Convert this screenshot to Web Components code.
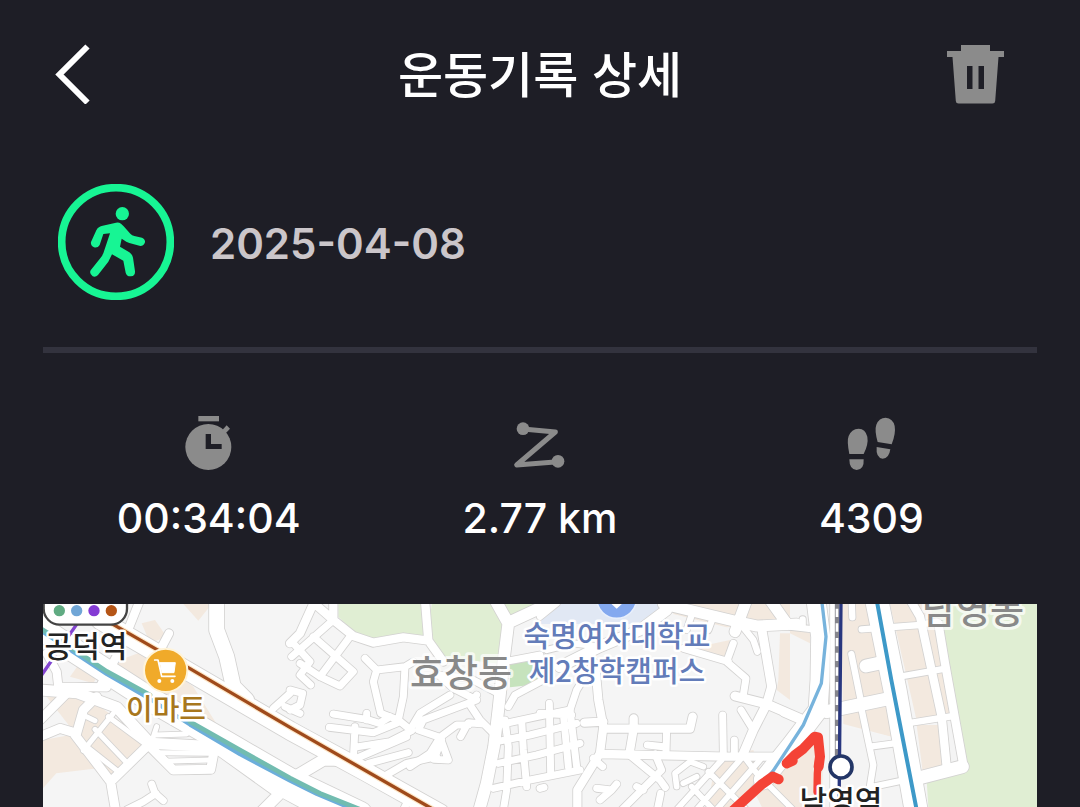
<!DOCTYPE html>
<html lang="ko">
<head>
<meta charset="utf-8">
<meta name="viewport" content="width=device-width, initial-scale=1">
<title>운동기록 상세</title>
<style>
  html { background: #1e1e26; }
  body { margin: 0; color: #fff; font-family: Inter, "Noto Sans CJK KR", sans-serif; }
</style>
</head>
<body>
<workout-page>
  <page-header slot="header">운동기록 상세</page-header>
  <workout-summary slot="summary"><time datetime="2025-04-08">2025-04-08</time></workout-summary>
  <stat-row slot="stats">
    <stat-item icon="time" label="운동 시간">00:34:04</stat-item>
    <stat-item icon="route" label="거리">2.77 km</stat-item>
    <stat-item icon="steps" label="걸음 수">4309</stat-item>
  </stat-row>
  <route-map slot="map"></route-map>
</workout-page>

<script>
const define = (name, render) => customElements.define(name, class extends HTMLElement {
  constructor() { super(); this.attachShadow({ mode: 'open' }); }
  connectedCallback() { this.shadowRoot.innerHTML = render(this); }
});

define('workout-page', () => `
  <style>
    :host { display: block; }
    main { display: flex; flex-direction: column; padding: 0 43px; }
  </style>
  <slot name="header"></slot>
  <main><slot name="summary"></slot><slot name="stats"></slot><slot name="map"></slot></main>`);

define('page-header', () => `
  <style>
    :host { display: block; }
    header { display: grid; grid-template-columns: 92px 1fr 60px; align-items: start; padding: 38px 75px 38px 43px; }
    h1 { margin: 0; text-align: center; font: 500 49px/68px "Noto Sans CJK KR", sans-serif; }
    button { display: block; width: 60px; height: 72px; padding: 0; border: 0; background: none; color: inherit; cursor: pointer; }
    svg { display: block; width: 60px; height: 60px; margin: auto; }
  </style>
  <header>
    <button type="button" aria-label="뒤로"><svg viewBox="43 44 60 60"><path d="M87.500 46.500 59.500 74.500l28 28" fill="none" stroke="#fff" stroke-width="6"/></svg></button>
    <h1><slot></slot></h1>
    <button type="button" aria-label="삭제"><svg viewBox="945 44 60 60"><path fill="#8b8b8b" fill-rule="evenodd" d="M961 45h29v6h14v6h-5.500l-3.300 44q-.2 2.500-2.700 2.500h-34q-2.500 0-2.700-2.500L952.500 57H947v-6h14zM967 66v23h5.500V66zM978.500 66v23h5.500V66z"/></svg></button>
  </header>`);

define('workout-summary', () => `
  <style>
    :host { display: flex; align-items: center; gap: 36px; padding: 36px 15px 47px; border-bottom: 6px solid #33333e; }
    svg { display: block; width: 116px; height: 116px; flex: none; }
    ::slotted(time) { padding-top: 4px; color: #cbc6ca; font-size: 42px; line-height: 52px; font-weight: 600; }
  </style>
  <svg viewBox="54 42 348 348" role="img" aria-label="걷기">
    <circle cx="228" cy="216" r="163" fill="none" stroke="#17f594" stroke-width="23"/>
    <g fill="#17f594">
      <circle cx="247" cy="131" r="20"/>
      <path d="M178 171Q182 168 188 167L228 158Q236 156 243 161L251 169 271 191Q276 196 283 198L306 203Q316 207 315 217 312 228 301 228L268 219Q258 216 251 210L245 206 240 230 268 247Q277 253 279 263L285 304Q286 317 273 319 260 320 257 308L250 272 216 253 205 275 174 315Q167 322 158 319 147 311 152 301L182 263Q187 257 190 250L210 190 190 192 179 225Q173 235 162 232 151 227 153 216L169 181Q172 174 178 171Z"/>
    </g>
  </svg>
  <slot></slot>`);

define('stat-row', () => `
  <style>
    :host { display: grid; grid-template-columns: repeat(3, 1fr); padding: 60px 0; }
  </style><slot></slot>`);

const statIcons = {
  time: ['236 39 180 180', `<path d="M294 48h62v16h-62z"/><circle cx="324" cy="141" r="69"/><path d="M364 92l15-16 10 10-15 16z"/><path fill="#1e1e26" d="M316 102h16v30h32v15h-48z"/>`],
  route: ['210 39 180 180', `<path fill="none" stroke="#8b8b8b" stroke-width="15" stroke-linejoin="round" stroke-linecap="round" d="M249 87l97 9-116 99 124-10"/><circle cx="249" cy="86" r="19"/><circle cx="354" cy="184" r="19"/>`],
  steps: ['184 39 180 180', `<path d="M209 162q-8-40-2-54 8-21 30-22 20 0 26 24 4 22-11 52zM209 178h43q2 31-21 32-22-1-22-32z"/><path d="M294 126q-10-36-4-52 8-21 28-21 22 2 27 25 4 22-9 55zM291 141l41 7q-4 28-23 28-21-3-18-35z"/>`]
};
define('stat-item', el => {
  const [box, art] = statIcons[el.getAttribute('icon')];
  return `
  <style>
    :host { display: flex; flex-direction: column; align-items: center; gap: 19px; }
    svg { display: block; width: 60px; height: 60px; }
    span { font-size: 41px; line-height: 52px; font-weight: 500; }
  </style>
  <svg viewBox="${box}" fill="#8b8b8b" role="img" aria-label="${el.getAttribute('label')}">${art}</svg>
  <span><slot></slot></span>`;
});

/* Map geometry is kept in tiles 750 units wide; three units make one CSS pixel. */
const land = [
  [0, '#f3e9df', 'M430 12h85l-40 50zM305 70l40-10 35 50-50 20zM240 180l80-30 140 110 75 120-235-80-100-60zM90 230l50-70 60 20-40 70zM9 420l110-20 55 105-125 15-40 45zM20 290l120 0 190 140-115 110-110-140zM40 12h90l-30 60z'],
  [750, '#e0eed3', 'M145 12h260l8 100-75-6-88 16-60-27-45-45zM425 12h195l24 60-14 120-170-22-45-70zM640 12h110l-90 44z'],
  [750, '#c6e3bd', 'M660 190l90-8v70l-90 10z'],
  [1500, '#e1e8f4', 'M40 12h335l-75 60H-10z'],
  [1500, '#f3e9df', 'M400 12h350v50l-190 20-160-40zM430 150l140-30-10 60zM530 470l110-20 30 90-80 90h-90zM720 100h30v200l-40-30 5-30z'],
  [2250, '#f3e9df', 'M0 80l60 20v30L0 100zM150 12h90l70 400-150-40zM300 12h120l90 340-130 10zM380 375h68l10 130-60 10zM0 490l50-60h50l-5 200H-80l-30-60z'],
  [2250, '#f4f4f4', 'M160 380l75 15 85 20 30 206H150zM450 365h45l20 130-55-5z'],
  [2250, '#e0eed3', 'M420 12h330v609H415l-5-80 120-30z']
];

const roads = [
  [0, 56, 'M180 60 450 217 750 392 980 517 1200 640'],
  [0, 72, 'M-20 70 100 150 330 298 560 430 750 540 960 640'],
  [0, 46, 'M530 0 530 90 560 170 580 260 620 300'],
  [0, 26, 'M387 100 350 170M300 0 240 150 180 260M20 160 50 215 55 260 200 262'],
  [0, 34, 'M0 270 110 278 230 322 330 430 525 440 720 580 660 640M720 580 780 560'],
  [0, 28, 'M330 430 212 545 228 640M105 405 212 545M0 410 60 385 110 400 130 330 170 290M0 360 80 280M330 440 400 510 512 508 525 440'],
  [0, 16, 'M140 350 165 362M130 452 220 340M165 388 262 490M140 440 235 515M205 350 320 435M345 405 440 402M350 380 330 440M350 458 510 460M370 484 510 480'],
  [0, 22, 'M335 552 345 580 370 602M348 580 310 605 260 630M750 280 700 325M735 320 780 340'],
  [750, 26, 'M75 0 30 100 0 130M75 12 130 60 190 108 250 128 340 112 415 122 460 185M130 60 130 0M405 0 415 122'],
  [750, 36, 'M610 -10 655 70 640 190 625 330 612 440 590 550 565 640M655 68 770 15'],
  [750, 22, 'M5 170 130 60M70 110 190 215 150 258 90 230 30 190M90 230 180 110M10 130 60 185 30 225 62 255M0 270 38 280 30 315 0 330'],
  [750, 22, 'M225 175 260 210 345 200 370 185M260 210 250 245 272 340 325 360 365 392M345 200 340 290 325 360M130 342 230 358 268 370 300 350M230 340 230 360M118 382 250 398 320 370M195 380 190 480M205 440 300 425 365 392M200 475 350 410M235 490 355 458M280 530 350 490 440 470'],
  [750, 22, 'M360 390 390 340 480 285M440 220 490 265 560 300 400 360 385 390 450 412 500 375 535 375M560 285 540 315 570 360 610 400M512 410 535 368 580 372M450 412 475 480 432 478 455 420M450 412 420 460 360 500M440 225 540 235 615 275'],
  [750, 22, 'M655 320 675 285 760 240M660 182 750 165M625 375 740 350 840 330M620 425 720 405 860 370M625 490 740 465 870 430M610 565 720 540 870 510M645 360 655 440 650 570 640 630M695 360 700 450 710 560'],
  [750, 36, 'M-10 545 100 480 150 480M-30 570 100 640'],
  [750, 22, 'M335 640 355 600'],
  [1500, 22, 'M160 190 110 270 90 330 110 500M28 310 32 520M70 340 85 500M0 340 95 345M0 565 12 562'],
  [1500, 26, 'M165 190 175 300 190 380 180 460 112 570 112 640M133 368 190 365M190 386 450 386 458 350M281 355 281 386 268 462M180 462 560 470 700 470'],
  [1500, 22, 'M380 386 378 460M322 435 370 440M265 462 360 540 376 562M345 462 365 510 235 640M362 580 350 640M160 475 188 500M170 565 215 570 230 552M180 600 215 570M290 560 310 570M583 420 583 465'],
  [1500, 22, 'M548 345 550 465M603 330 640 390M580 130 560 185 618 235 610 285M565 185 430 145'],
  [1500, 28, 'M585 288 680 312 780 355M665 85 695 260 680 312 640 390 608 465'],
  [1500, 34, 'M370 12 590 65 650 78 770 72M380 30 300 90 180 140 60 200M620 0 585 95M690 0 740 70'],
  [1500, 20, 'M600 70 640 120 652 155M460 30 440 90M520 50 505 90M0 50 50 10M180 140 100 130 20 150'],
  [1500, 18, 'M410 560 405 520 450 485 490 500M430 550 470 530M400 640 545 480M460 640 600 480M520 640 660 480M580 640 740 450M455 560 530 640M505 515 630 640M620 480 650 520M680 550 770 640'],
  [2250, 26, 'M133 0 133 640'],
  [2250, 58, 'M78 0 92 110 90 240 84 330 0 440 -80 540'],
  [2250, 70, 'M258 -10 315 270 380 640'],
  [2250, 20, 'M0 80 70 88M38 58 38 80M185 0 187 52M-20 340 60 375M215 88 390 75 440 65M184 162 214 310M340 228 470 205M365 368 490 348M215 330 250 495 238 570M240 440 330 428M240 562 345 540'],
  [2250, 40, 'M228 198 275 188M110 335 300 295M395 532 517 500'],
  [2250, 26, 'M355 -10 390 50 455 350 470 500M445 70 465 190 520 495']
];

/* Casings go down first and fills on top, so that crossings stay open. */
const strokeRoads = extra => roads.map(([x, w, d]) =>
  `<path transform="translate(${x} 0)" d="${d}" stroke-width="${w + extra}"/>`).join('');

define('route-map', () => `
  <style>
    :host { display: block; }
    svg { display: block; width: 100%; height: auto; background: #f5f5f5; }
    text { paint-order: stroke; stroke: #fff; stroke-linejoin: round; font-family: "Noto Sans CJK KR", sans-serif; text-anchor: middle; }
    .station { font-size: 30px; font-weight: 500; fill: #222; stroke-width: 5px; }
    .district { font-size: 37px; font-weight: 500; fill: #898989; stroke-width: 6px; stroke-opacity: .7; }
    .school { font-size: 29px; font-weight: 500; fill: #637cb9; stroke-width: 5px; }
    .shop { font-size: 29px; font-weight: 500; fill: #a8771d; stroke-width: 5px; }
  </style>
  <svg viewBox="43 604 994 203" role="img" aria-label="운동 경로 지도">
    <g transform="translate(40 600) scale(.333333)" stroke-linejoin="round" stroke-linecap="round">
      ${land.map(([x, c, d]) => `<path transform="translate(${x} 0)" fill="${c}" d="${d}"/>`).join('')}
      <g fill="none" stroke="#d3d2d1">${strokeRoads(4)}</g>
      <g fill="none" stroke="#fff">${strokeRoads(-1)}</g>
      <g fill="none">
        <path stroke="#8344cf" stroke-width="10" d="M112 70 0 232"/>
        <path stroke="#6caedb" stroke-width="12" d="M9 96 100 156 200 222 330 297 450 374 600 463 750 542 830 582 940 628"/>
        <path stroke="#72bcb0" stroke-width="14" d="M0 84 110 154 200 214 330 285 M450 365 600 450 750 534 840 580 960 628"/>
        <path stroke="#fde7c8" stroke-width="17" d="M210 68 450 206 750 382 1190 634"/>
        <path stroke="#9f4a1b" stroke-width="10" d="M210 68 450 206 750 382 1190 634"/>
      </g>
      <g transform="translate(2250 0)" fill="none">
        <path stroke="#77b3dc" stroke-width="10" d="M95 0 108 110 94 250 40 375 0 436-50 512-90 560"/>
        <path stroke="#3d99c8" stroke-width="12" d="M260 0 304 240 382 640"/>
        <path stroke="#85858c" stroke-width="13" stroke-linecap="butt" d="M141 12V470"/>
        <path stroke="#fff" stroke-width="8" stroke-linecap="butt" stroke-dasharray="25 19" d="M141 26V470"/>
        <path stroke="#29377f" stroke-width="10" d="M153 0 147 640"/>
        <path stroke="#f44336" stroke-width="22" d="M81 575 82 520 86 480"/>
        <path stroke="#f44336" stroke-width="30" d="M86 500 90 470 84 412 74 410 40 446 14 466-10 490 8 482"/>
        <path stroke="#f44336" stroke-width="30" d="M-34 538-52 530-86 554-126 590-180 640"/>
        <circle cx="153" cy="501" r="33" fill="#fff" stroke="#233667" stroke-width="11"/>
      </g>
      <rect x="11" y="-40" width="250" height="114" rx="48" fill="#fff" stroke="#444" stroke-width="7"/>
      <circle cx="58" cy="32" r="17" fill="#60ab82"/><circle cx="110" cy="32" r="17" fill="#70a6d6"/>
      <circle cx="162" cy="32" r="17" fill="#843bd4"/><circle cx="214" cy="32" r="17" fill="#b55516"/>
      <circle cx="377" cy="211" r="65" fill="#f0aa2a" stroke="#fff4d9" stroke-width="6"/>
      <path d="M344 180h10l11 49h40" fill="none" stroke="#fff" stroke-width="5"/>
      <path d="M359 188h47l-4 30h-37z" fill="#fff" stroke="#fff" stroke-width="3"/>
      <circle cx="358" cy="243" r="6" fill="#fff"/><circle cx="397" cy="243" r="6" fill="#fff"/>
      <circle cx="1730" cy="-5" r="60" fill="#84a9ef" stroke="#e8effc" stroke-width="5"/>
      <path d="M1710 8h40l-20 18z" fill="#fff"/>
    </g>
    <text class="station" x="86" y="657">공덕역</text>
    <text class="shop" x="166" y="720">이마트</text>
    <text class="district" x="461" y="687">효창동</text>
    <text class="school"><tspan x="617" y="647">숙명여자대학교</tspan><tspan x="617" y="682">제2창학캠퍼스</tspan></text>
    <text class="district" x="973" y="624">남영동</text>
    <text class="station" x="841" y="812">남영역</text>
  </svg>`);
</script>
</body>
</html>
